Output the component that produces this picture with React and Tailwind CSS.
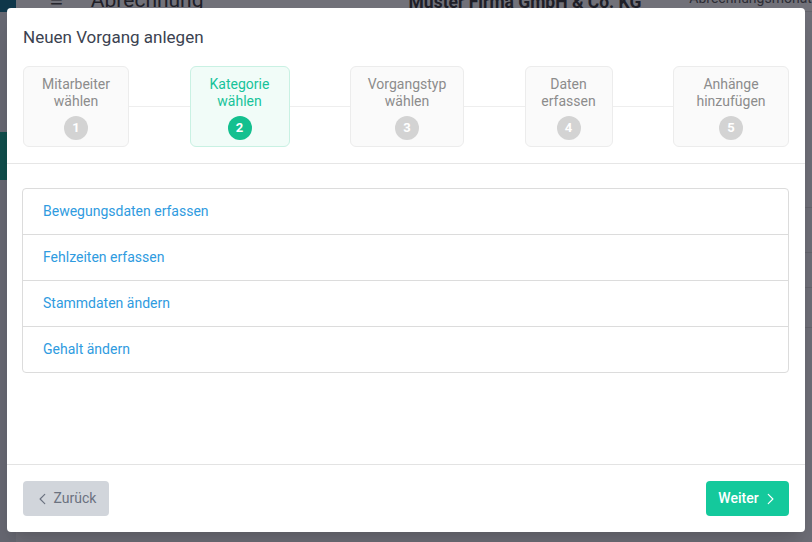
import React from 'react';

const steps = [
  { label: ['Mitarbeiter', 'wählen'], width: 'w-[106px]' },
  { label: ['Kategorie', 'wählen'], width: 'w-[100px]', active: true },
  { label: ['Vorgangstyp', 'wählen'], width: 'w-[114px]' },
  { label: ['Daten', 'erfassen'], width: 'w-[88px]' },
  { label: ['Anhänge', 'hinzufügen'], width: 'w-[116px]' },
];

const categories = [
  'Bewegungsdaten erfassen',
  'Fehlzeiten erfassen',
  'Stammdaten ändern',
  'Gehalt ändern',
];

function Step({ step, index }) {
  return (
    <div
      className={`${step.width} shrink-0 h-[81px] rounded-md border flex flex-col items-center pt-[9px] ${
        step.active ? 'bg-[#f1fcf8] border-[#c9f1e3]' : 'bg-[#fafafa] border-[#ececec]'
      }`}
    >
      <div className={`text-[14px] leading-[17px] text-center ${step.active ? 'text-[#17c39a]' : 'text-[#8c8c8c]'}`}>
        {step.label[0]}
        <br />
        {step.label[1]}
      </div>
      <div
        className={`mt-[6px] w-6 h-6 rounded-full flex items-center justify-center text-white text-[13px] font-bold ${
          step.active ? 'bg-[#14c08f]' : 'bg-[#d3d3d3]'
        }`}
      >
        {index + 1}
      </div>
    </div>
  );
}

function Background() {
  return (
    <div className="flex h-full w-full bg-[#f4f5f7]">
      <div className="w-4 shrink-0 flex flex-col bg-[#e4e6ea]">
        <div className="h-[12px] bg-[#0c6f8a]" />
        <div className="h-[120px]" />
        <div className="h-[48px] bg-[#10a58d]" />
      </div>
      <div className="flex-1 flex flex-col">
        <div className="h-[40px] -mt-[28px] bg-white flex items-end border-b border-[#dddddd] leading-none">
          <span className="ml-[34px] text-[22px] text-[#444]">≡</span>
          <span className="ml-[28px] text-[21px] text-[#333]">Abrechnung</span>
          <span className="ml-[205px] text-[17.5px] font-bold text-[#333]">Muster Firma GmbH &amp; Co. KG</span>
          <span className="ml-[48px] text-[14px] text-[#555] pb-[6px] whitespace-nowrap">Abrechnungsmonat</span>
        </div>
        <div className="flex-1 flex justify-end">
          <div className="w-[40px] flex flex-col">
            <div className="h-[195px]" />
            <div className="h-[45px] border-t border-[#dddddd] text-[#1a9e7a] font-bold text-[15px] pt-[15px]">St</div>
            <div className="h-[35px] border-t border-[#dddddd]" />
            <div className="h-[40px] border-t border-[#dddddd]" />
            <div className="pt-[18px] border-t border-[#dddddd] text-[#333] text-[15px]">N</div>
          </div>
        </div>
      </div>
    </div>
  );
}

export default function App() {
  return (
    <div className="relative w-[812px] h-[542px] overflow-hidden font-['Roboto','Liberation_Sans',sans-serif]">
      <Background />
      <div className="absolute inset-0 bg-[rgba(18,18,32,0.6)]" />

      <div className="absolute left-[7px] top-[8px] w-[798px] h-[524px] bg-white rounded-[4px] shadow-xl flex flex-col">
        <div className="px-4 pt-[17px] text-[17px] leading-6 text-[#3b4250]">Neuen Vorgang anlegen</div>

        <div className="px-4 mt-[17px] pb-[16px] border-b border-[#e6e6e6]">
          <div className="flex items-center">
            {steps.map((step, i) => (
              <React.Fragment key={i}>
                {i > 0 && <div className="flex-1 h-px bg-[#eeeeee]" />}
                <Step step={step} index={i} />
              </React.Fragment>
            ))}
          </div>
        </div>

        <div className="flex-1 pt-[24px] pl-[15px] pr-4">
          <div className="border border-[#dcdcdc] rounded-[4px]">
            {categories.map((c, i) => (
              <div
                key={c}
                className={`flex items-center px-5 text-[14px] text-[#2f9be0] ${
                  i > 0 ? 'h-[46px] border-t border-[#dcdcdc]' : 'h-[45px]'
                }`}
              >
                {c}
              </div>
            ))}
          </div>
        </div>

        <div className="border-t border-[#e3e3e3] px-4 pt-4 pb-4 flex justify-between">
          <button className="h-[35px] w-[86px] rounded-[4px] bg-[#d1d5db] text-[#6b7280] text-[14px] flex items-center justify-center gap-1">
            <svg width="14" height="14" viewBox="0 0 24 24" fill="none" stroke="currentColor" strokeWidth="2" strokeLinecap="round" strokeLinejoin="round">
              <path d="M15 4l-8 8 8 8" />
            </svg>
            Zurück
          </button>
          <button className="h-[35px] w-[83px] rounded-[4px] bg-[#14c99c] text-white text-[14px] font-medium flex items-center justify-center gap-1">
            Weiter
            <svg width="14" height="14" viewBox="0 0 24 24" fill="none" stroke="currentColor" strokeWidth="2" strokeLinecap="round" strokeLinejoin="round">
              <path d="M9 4l8 8-8 8" />
            </svg>
          </button>
        </div>
      </div>
    </div>
  );
}
